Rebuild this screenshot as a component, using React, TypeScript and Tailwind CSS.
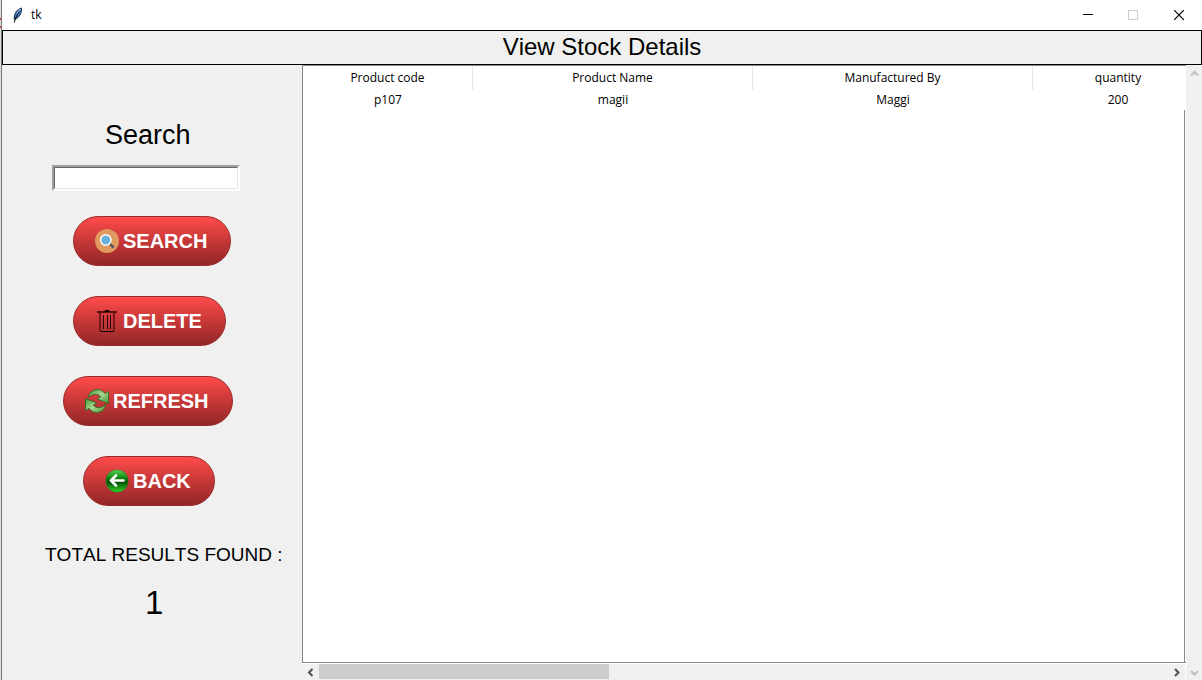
import React from "react";

const rows = [{ code: "p107", name: "magii", maker: "Maggi", quantity: "200" }];

function Feather() {
  return (
    <svg width="16" height="16" viewBox="0 0 16 16" aria-hidden="true">
      <path d="M4 13C3 8.500 5 3 11.600 .5c1.300 3.500-.6 8.300-4.600 11.300z" fill="#1d2a3c" />
      <path d="M4.800 11C4.500 7 6.800 3.200 11.200 1.500 11.600 5 9.600 8.800 6.500 11.200z" fill="#3f7fd0" />
      <path d="M6.200 7C7 4.500 8.800 2.800 10.800 1.900L8.500 6z" fill="#b4d4f5" />
      <path d="M9.500 4C7.500 7 5.500 10.500 4.300 15.500" stroke="#0a0a0a" strokeWidth="1" fill="none" />
    </svg>
  );
}

function SearchIcon() {
  return (
    <svg width="24" height="24" viewBox="0 0 24 24" aria-hidden="true">
      <circle cx="12" cy="12" r="12" fill="#e0995e" />
      <path d="M14.500 14.500l4.200 4.200" stroke="#4c5566" strokeWidth="2.400" />
      <circle cx="10.800" cy="11" r="5.200" fill="#68b0d8" stroke="#fff" strokeWidth="1.500" />
    </svg>
  );
}

function TrashIcon() {
  return (
    <svg width="24" height="24" viewBox="0 0 24 24" aria-hidden="true" fill="none" shapeRendering="crispEdges">
      <path d="M2 3h20" stroke="#5c1414" strokeWidth="2" />
      <path d="M10 1.500h4" stroke="#1c0404" strokeWidth="1" />
      <path d="M5 4v18M19 4v18" stroke="#741a1a" strokeWidth="2" />
      <path d="M5 22.500h14" stroke="#1c0404" strokeWidth="1" />
      <path d="M8.500 6v14M12.500 6v14M15.500 6v14" stroke="#260606" strokeWidth="1" />
      <path d="M9 2.500h6" stroke="#1c0404" strokeWidth="1" />
    </svg>
  );
}

function RefreshIcon() {
  return (
    <svg width="24" height="24" viewBox="0 0 24 24" aria-hidden="true">
      <defs>
        <linearGradient id="leaf" x1="0" y1="0" x2="1" y2="1">
          <stop offset="0" stopColor="#3f9430" />
          <stop offset="0.5" stopColor="#a9d894" />
          <stop offset="1" stopColor="#3f9430" />
        </linearGradient>
      </defs>
      <g fill="url(#leaf)" stroke="#2c6b24" strokeWidth="0.900" strokeLinejoin="round">
        <path d="M3.200 8.600C4.200 3.500 8 .5 12.500 .5c3 0 5.600 1.500 7.600 4.200L23.500 2.300V14.500L12.300 10l3.500-2.200C13 4.800 8.300 4 3.200 8.600z" />
        <path d="M20.800 15.400C19.800 20.500 16 23.500 11.500 23.500c-3 0-5.600-1.500-7.600-4.200L.5 21.700V9.500L11.700 14l-3.500 2.200C11 19.200 15.700 20 20.800 15.400z" />
      </g>
    </svg>
  );
}

function BackIcon() {
  return (
    <svg width="24" height="24" viewBox="0 0 24 24" aria-hidden="true">
      <defs>
        <linearGradient id="ball" x1="0" y1="0" x2="0" y2="1">
          <stop offset="0" stopColor="#5ad653" />
          <stop offset="0.35" stopColor="#118a12" />
          <stop offset="0.55" stopColor="#044d05" />
          <stop offset="1" stopColor="#35d928" />
        </linearGradient>
      </defs>
      <circle cx="12" cy="12" r="11.200" fill="url(#ball)" stroke="#2d7a22" strokeWidth="0.600" />
      <path d="M11 6.500L6 11.500l5 5M6.500 11.500h12" fill="none" stroke="#fff" strokeWidth="2.600" strokeLinecap="round" strokeLinejoin="round" />
    </svg>
  );
}

function PillButton({ icon, children, className }: { icon: React.ReactNode; children: string; className: string }) {
  return (
    <button
      type="button"
      className={`${className} flex h-[50px] items-center gap-1 rounded-full border border-[#9a2b2b] bg-linear-to-b from-[#ff4b4b] to-[#922626] pr-[23px] pl-[21px] text-xl font-bold text-white`}
    >
      {icon}
      {children}
    </button>
  );
}

const chevrons = {
  up: "M1 6.500L4.500 3L8 6.500",
  down: "M1 3L4.500 6.500L8 3",
  left: "M6.500 1L3 4.500L6.500 8",
  right: "M3 1L6.500 4.500L3 8",
};

function Arrow({ direction, color }: { direction: keyof typeof chevrons; color: string }) {
  return (
    <button type="button" aria-label={`Scroll ${direction}`} className="flex h-4 w-[17px] shrink-0 items-center justify-center">
      <svg width="9" height="9" viewBox="0 0 9 9" fill="none" stroke={color} strokeWidth="2">
        <path d={chevrons[direction]} />
      </svg>
    </button>
  );
}

function TitleBar() {
  return (
    <header className="flex h-[30px] items-center bg-white pl-2">
      <Feather />
      <span className="ml-[5px] flex-1 font-['Open_Sans','Noto_Sans',sans-serif] text-xs">tk</span>
      <div className="flex h-full">
        <button type="button" aria-label="Minimize" className="flex w-[45px] items-center justify-center">
          <svg width="10" height="10" viewBox="0 0 10 10" stroke="#000"><path d="M0 4.500h10" /></svg>
        </button>
        <button type="button" aria-label="Maximize" disabled className="flex w-[45px] items-center justify-center">
          <svg width="10" height="10" viewBox="0 0 10 10" fill="none" stroke="#ccc"><path d="M.5 .5h9v9h-9z" /></svg>
        </button>
        <button type="button" aria-label="Close" className="flex w-[47px] items-center justify-center">
          <svg width="10" height="10" viewBox="0 0 10 10" stroke="#000" strokeWidth="1.200"><path d="M0 0l10 10M10 0L0 10" /></svg>
        </button>
      </div>
    </header>
  );
}

function Sidebar() {
  return (
    <aside className="flex w-[300px] shrink-0 flex-col items-start">
      <label htmlFor="search" className="mt-[54px] ml-[103px] text-[27px] leading-8">Search</label>
      <div className="mt-3.5 ml-[50px] border-2 border-t-[#a0a0a0] border-r-white border-b-white border-l-[#a0a0a0]">
        <input
          id="search"
          type="text"
          className="block h-[22px] w-[184px] border border-t-[#696969] border-r-[#e3e3e3] border-b-[#e3e3e3] border-l-[#696969] bg-white px-1 text-sm outline-none"
        />
      </div>
      <div className="mt-[25px] flex flex-col items-start gap-[30px]">
        <PillButton className="ml-[71px]" icon={<SearchIcon />}>SEARCH</PillButton>
        <PillButton className="ml-[71px]" icon={<TrashIcon />}>DELETE</PillButton>
        <PillButton className="ml-[61px]" icon={<RefreshIcon />}>REFRESH</PillButton>
        <PillButton className="ml-[81px]" icon={<BackIcon />}>BACK</PillButton>
      </div>
      <p className="mt-[37px] ml-[43px] text-[19px] leading-6 whitespace-nowrap [font-kerning:none]">TOTAL RESULTS FOUND :</p>
      <output className="mt-4 ml-[143px] text-[33px] leading-10">1</output>
    </aside>
  );
}

function StockTable() {
  return (
    <div className="flex min-w-0 flex-1 flex-col bg-white">
      <div className="flex flex-1 flex-col overflow-hidden border-t border-b border-l border-[#828790]">
        <table className="w-[900px] table-fixed border-separate border-spacing-0 text-center font-['Open_Sans','Noto_Sans',sans-serif] text-xs">
          <colgroup>
            <col className="w-[170px]" />
            <col className="w-[280px]" />
            <col className="w-[280px]" />
            <col className="w-[170px]" />
          </colgroup>
          <thead>
            <tr className="h-6">
              <th className="border-r border-[#e5e5e5] p-0 font-normal">Product code</th>
              <th className="border-r border-[#e5e5e5] p-0 font-normal">Product Name</th>
              <th className="border-r border-[#e5e5e5] p-0 font-normal">Manufactured By</th>
              <th className="p-0 font-normal">quantity</th>
            </tr>
          </thead>
          <tbody>
            {rows.map((row) => (
              <tr key={row.code} className="h-5">
                <td className="p-0">{row.code}</td>
                <td className="p-0">{row.name}</td>
                <td className="p-0">{row.maker}</td>
                <td className="p-0">{row.quantity}</td>
              </tr>
            ))}
          </tbody>
        </table>
        <div className="mr-px flex-1 border-r border-[#828790]" />
      </div>
      <div className="mt-px mr-px flex h-4 items-center bg-[#f0f0f0]">
        <Arrow direction="left" color="#505050" />
        <div className="h-full flex-1 pb-px">
          <div className="h-full w-[34.2%] bg-[#cdcdcd]" />
        </div>
        <Arrow direction="right" color="#505050" />
      </div>
    </div>
  );
}

export default function App() {
  return (
    <div className="flex min-h-screen bg-[#f0f0f0] font-['Liberation_Sans',Arial,sans-serif] text-black">
      <div className="flex w-px flex-col bg-[#dcdcdc] pt-[18px]">
        <div className="h-2.5 border-y-2 border-[#d83a34]" />
      </div>
      <div className="flex min-w-0 flex-1 flex-col border-l border-[#777]">
        <TitleBar />
        <h1 className="h-[35px] border border-black text-center text-2xl leading-8 [font-kerning:none]">View Stock Details</h1>
        <main className="flex flex-1">
          <Sidebar />
          <StockTable />
          <div className="flex w-4 flex-col items-center justify-between">
            <Arrow direction="up" color="#bfbfbf" />
            <Arrow direction="down" color="#bfbfbf" />
          </div>
        </main>
      </div>
    </div>
  );
}
